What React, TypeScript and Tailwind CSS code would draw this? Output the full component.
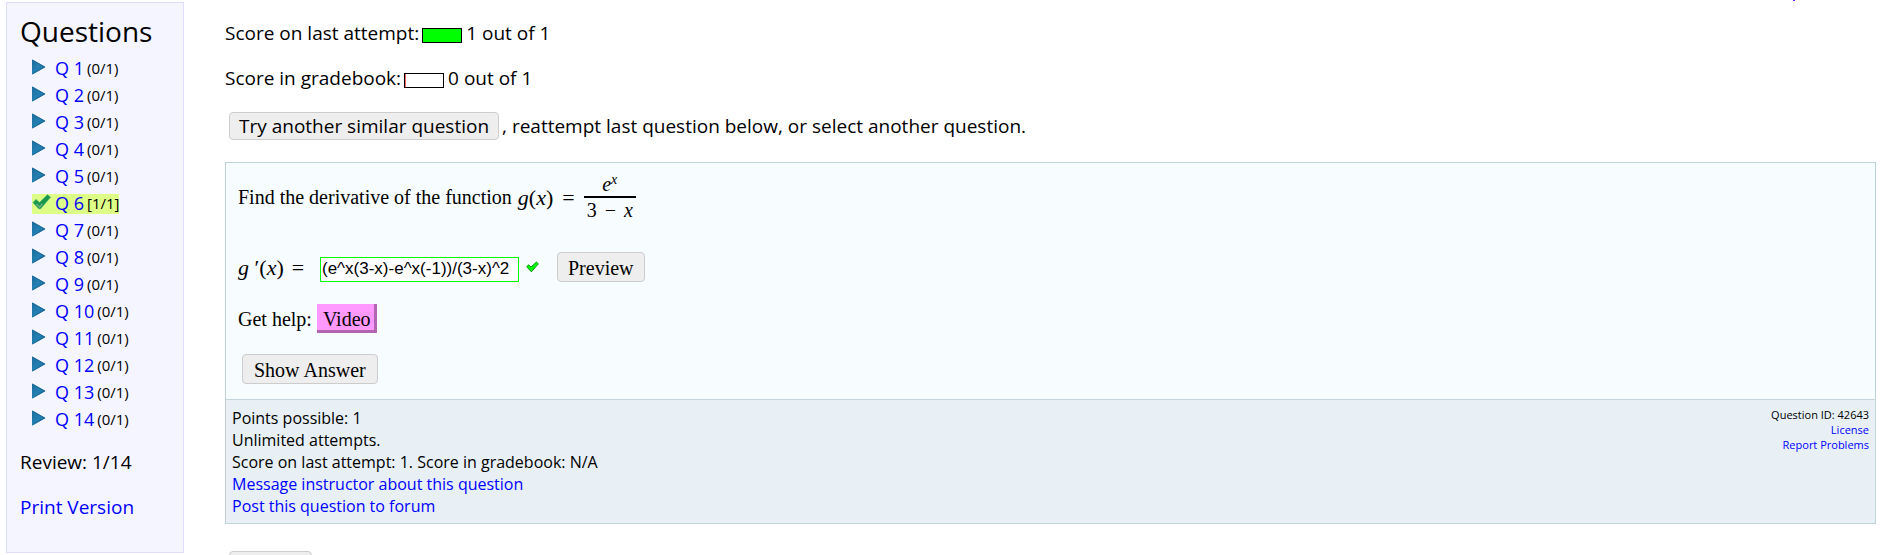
import React from "react";

type Question = { id: number; score: string; done?: boolean };

const questions: Question[] = Array.from({ length: 14 }, (_, i) =>
  i === 5 ? { id: 6, score: "[1/1]", done: true } : { id: i + 1, score: "(0/1)" }
);

const linkClass = "text-[#0000ff] hover:underline";
const buttonClass = "rounded border border-[#cccccc] bg-[#eeeeee] text-black";

function Arrow() {
  return (
    <svg width="20" height="16" viewBox="0 0 20 16" aria-hidden="true">
      <defs>
        <linearGradient id="arrow" x1="0" y1="0" x2="1" y2="1">
          <stop offset="0" stopColor="#1a6c9c" />
          <stop offset="0.5" stopColor="#2480b2" />
          <stop offset="1" stopColor="#125f90" />
        </linearGradient>
      </defs>
      <path d="M0 0.5 L13.5 8 L0 15.5 Z" fill="url(#arrow)" />
      <path d="M0.5 1 L12.8 8 L0.5 15" fill="none" stroke="#17618f" strokeWidth="0.8" />
    </svg>
  );
}

function Check() {
  return (
    <svg width="20" height="16" viewBox="0 0 20 16" aria-hidden="true">
      <path
        d="M1 8.5 L4 5.5 L7.5 8.6 L15.5 0.8 L18.5 3.2 L8.5 14.8 L6.8 14.8 Z"
        fill="#18984c"
        stroke="#3fae6b"
        strokeWidth="0.8"
        strokeLinejoin="round"
      />
      <path d="M4.5 10 L7.6 13 L10.5 9.8" fill="none" stroke="#6cab83" strokeWidth="1.6" />
    </svg>
  );
}

function SmallCheck() {
  return (
    <svg width="13" height="12" viewBox="0 0 13 12" role="img" aria-label="Correct">
      <path
        d="M0.7 5.6 L2.8 3.8 L5 6 L10.4 1 L12.4 2.8 L5.8 10.4 L4.8 10.4 Z"
        fill="#00ff00"
        stroke="#16831b"
        strokeWidth="0.9"
        strokeLinejoin="round"
      />
    </svg>
  );
}

function Sidebar() {
  return (
    <nav className="w-[178px] shrink-0 border border-[#ddddff] bg-[#f5f5ff] px-[13px] pt-[6px] pb-[31px]">
      <h2 className="text-[28px] leading-[44px]">Questions</h2>
      <ul className="pt-[2px] pl-3 text-[18px]">
        {questions.map((q) => (
          <li key={q.id} className="flex h-[27px] items-center">
            <span className={q.done ? "flex h-5 items-center bg-[#ddff88]" : "flex h-5 items-center"}>
              <span className="w-[23px] pb-1">{q.done ? <Check /> : <Arrow />}</span>
              <a href="#" className={linkClass}>
                Q {q.id}
              </a>
              <span className="pl-[3px] text-[15px]">{q.score}</span>
            </span>
          </li>
        ))}
      </ul>
      <p className="mt-4 leading-[27px]">Review: 1/14</p>
      <p className="mt-[18px] leading-[27px]">
        <a href="#" className={linkClass}>
          Print Version
        </a>
      </p>
    </nav>
  );
}

function QuestionPanel() {
  return (
    <section className="mt-[22px] border border-[#bfd3da] bg-[#f7fdff]">
      <div className="flex flex-col items-start px-3 pt-[6px] pb-[15px] font-['Liberation_Serif',serif] text-[20px]">
        <div className="flex h-14 items-center">
          <span>Find the derivative of the function</span>
          <span className="flex items-center pl-[6px]">
            <span className="text-[22px]">
              <i>g</i>(<i>x</i>)
            </span>
            <span className="px-[9px] text-[22px]">=</span>
            <span className="flex flex-col items-center">
              <span className="leading-6">
                <i>e</i>
                <sup className="text-[14px]">
                  <i>x</i>
                </sup>
              </span>
              <span className="border-t-2 border-black px-[3px] leading-6">
                3 <span className="px-[3px]">−</span> <i>x</i>
              </span>
            </span>
          </span>
        </div>
        <div className="mt-[27px] flex h-[30px] items-center">
          <label htmlFor="answer" className="flex w-[82px] items-center">
            <span className="text-[22px]">
              <i>g</i> ′(<i>x</i>)
            </span>
            <span className="pl-2 text-[22px]">=</span>
          </label>
          <input
            id="answer"
            type="text"
            defaultValue="(e^x(3-x)-e^x(-1))/(3-x)^2"
            className="mt-1 h-[25px] w-[199px] border border-[#00ff00] bg-white px-px font-['Liberation_Sans',sans-serif] text-[17px]"
          />
          <span className="w-[38px] pl-[7px]">
            <SmallCheck />
          </span>
          <button type="button" className={`${buttonClass} h-[30px] px-[10px]`}>
            Preview
          </button>
        </div>
        <div className="mt-[22px] flex h-[29px] items-center">
          <span className="pr-[5px]">Get help:</span>
          <button
            type="button"
            className="h-[29px] border-r-[3px] border-b-[3px] border-[#b266b2] bg-[#ff99ff] pr-[3px] pl-[6px]"
          >
            Video
          </button>
        </div>
        <button type="button" className={`${buttonClass} mt-[21px] ml-1 h-[30px] px-[11px]`}>
          Show Answer
        </button>
      </div>
      <footer className="flex justify-between border-t border-[#c5d5dd] bg-[#e8f0f6] px-[6px] pt-[7px] pb-[6px]">
        <div className="text-[16px] leading-[22px]">
          <p>Points possible: 1</p>
          <p>Unlimited attempts.</p>
          <p>Score on last attempt: 1. Score in gradebook: N/A</p>
          <p>
            <a href="#" className={linkClass}>
              Message instructor about this question
            </a>
          </p>
          <p>
            <a href="#" className={linkClass}>
              Post this question to forum
            </a>
          </p>
        </div>
        <div className="text-right text-[11px] leading-[15px]">
          <p>Question ID: 42643</p>
          <p>
            <a href="#" className={linkClass}>
              License
            </a>
          </p>
          <p>
            <a href="#" className={linkClass}>
              Report Problems
            </a>
          </p>
        </div>
      </footer>
    </section>
  );
}

export default function App() {
  return (
    <div className="flex h-screen items-start overflow-hidden bg-white pr-[11px] pl-[6px] font-['Open_Sans',sans-serif] text-[19px] text-black">
      <div className="pt-[2px]">
        <Sidebar />
      </div>
      <main className="ml-[41px] min-w-0 flex-1">
        <div className="flex h-5 justify-end pr-[81px]">
          <span className="h-px w-[2px] bg-[#7a1cff]" />
        </div>
        <p className="flex h-[27px] items-center">
          <span>Score on last attempt:</span>
          <span className="mt-1 mr-1 ml-[3px] h-[15px] w-10 border border-black bg-[#00ff00]" />
          <span>1 out of 1</span>
        </p>
        <p className="mt-[18px] flex h-[27px] items-center">
          <span>Score in gradebook:</span>
          <span className="mt-1 mr-1 ml-[3px] flex h-[15px] w-10 border border-black bg-white">
            <span className="w-px bg-[#ff6666]" />
          </span>
          <span>0 out of 1</span>
        </p>
        <div className="mt-5 flex h-[28px] items-center pl-1">
          <button type="button" className={`${buttonClass} flex h-[28px] items-center px-[9px]`}>
            Try another similar question
          </button>
          <span className="pl-[3px]">, reattempt last question below, or select another question.</span>
        </div>
        <QuestionPanel />
        <div className="mt-[27px] pl-1">
          <button type="button" className={`${buttonClass} h-[28px] w-[83px]`} />
        </div>
      </main>
    </div>
  );
}
